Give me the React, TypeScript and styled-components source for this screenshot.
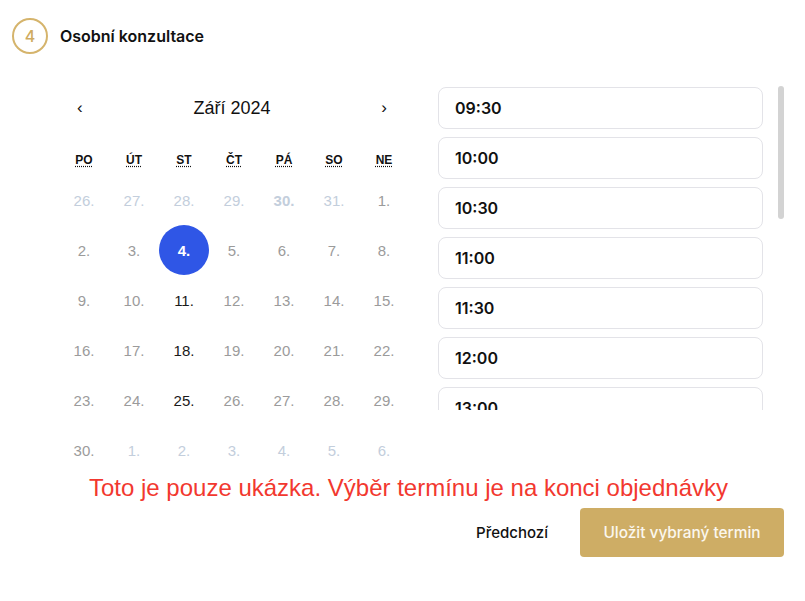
import React from "react";
import styled, { createGlobalStyle } from "styled-components";

const Global = createGlobalStyle`
  html, body { margin: 0; padding: 0; background: #fff; }
  body { font-family: Inter, "Noto Sans", sans-serif; color: #111; }
  * { box-sizing: border-box; }
`;

const Page = styled.div`
  width: 805px;
  display: flex;
  flex-direction: column;
`;

const Header = styled.div`
  display: flex;
  align-items: center;
  gap: 12px;
  padding: 18px 0 0 12px;
`;

const StepBadge = styled.div`
  width: 36px;
  height: 36px;
  border-radius: 50%;
  border: 2px solid #d5b46c;
  color: #cfab5f;
  display: flex;
  align-items: center;
  justify-content: center;
  font-size: 16px;
  font-weight: 500;
`;

const Title = styled.h2`
  margin: 0;
  font-size: 16px;
  font-weight: 600;
  color: #111;
`;

const Main = styled.div`
  display: grid;
  grid-template-columns: 347px 346px;
  column-gap: 32px;
  padding-left: 59px;
  margin-top: 33px;
  align-items: start;
`;

const Calendar = styled.div`
  display: flex;
  flex-direction: column;
  font-family: "Liberation Sans", Arial, sans-serif;
`;

const Nav = styled.div`
  height: 42px;
  display: flex;
  align-items: center;
  justify-content: space-between;
  padding: 0 19px 0 18px;
  margin-bottom: 16px;
`;

const NavArrow = styled.button`
  border: 0;
  background: none;
  padding: 0;
  font-family: "Liberation Sans", Arial, sans-serif;
  font-size: 17px;
  color: #111;
  cursor: pointer;
`;

const MonthLabel = styled.div`
  font-size: 18px;
  color: #111;
`;

const Grid = styled.div`
  display: grid;
  grid-template-columns: repeat(7, 1fr);
`;

const WeekDay = styled.abbr`
  height: 30px;
  display: flex;
  align-items: center;
  justify-content: center;
  font-size: 12px;
  font-weight: 700;
  color: #111;
  text-decoration: underline dotted;
  text-underline-offset: 2px;
  cursor: help;
`;

type Kind = "outside" | "muted" | "available" | "selected";

const DayCell = styled.div`
  height: 50px;
  display: flex;
  align-items: center;
  justify-content: center;
`;

const colors: Record<Kind, string> = {
  outside: "#c3cedc",
  muted: "#9b9b9b",
  available: "#1a1a1a",
  selected: "#ffffff",
};

const Day = styled.div<{ $kind: Kind; $bold?: boolean }>`
  width: 50px;
  height: 50px;
  border-radius: 50%;
  display: flex;
  align-items: center;
  justify-content: center;
  font-size: 15px;
  color: ${(p) => colors[p.$kind]};
  background: ${(p) => (p.$kind === "selected" ? "#2f56e6" : "transparent")};
  font-weight: ${(p) => (p.$bold || p.$kind === "selected" ? 700 : 400)};
`;

const SlotsPane = styled.div`
  position: relative;
  height: 323px;
`;

const Slots = styled.div`
  height: 100%;
  overflow-y: auto;
  padding-right: 21px;
  display: flex;
  flex-direction: column;
  gap: 8px;
  scrollbar-width: none;
  &::-webkit-scrollbar { display: none; }
`;

const ScrollThumb = styled.div`
  position: absolute;
  top: -1px;
  right: 0;
  width: 6px;
  border-radius: 3px;
  background: #d3d3d3;
  pointer-events: none;
`;

const Slot = styled.button`
  flex: 0 0 42px;
  height: 42px;
  width: 100%;
  border: 1px solid #e3e3e8;
  border-radius: 8px;
  background: #fff;
  text-align: left;
  padding: 0 16px;
  font-family: Inter, "Noto Sans", sans-serif;
  font-size: 16px;
  font-weight: 600;
  color: #111;
  cursor: pointer;
`;

const Notice = styled.p`
  margin: 0;
  padding-left: 12px;
  text-align: center;
  font-family: "Liberation Sans", Arial, sans-serif;
  font-size: 24px;
  line-height: 26px;
  color: #f2382f;
`;

const Actions = styled.div`
  display: flex;
  justify-content: flex-end;
  align-items: center;
  gap: 32px;
  padding-right: 21px;
  margin-top: 7px;
`;

const GhostButton = styled.button`
  border: 0;
  background: none;
  padding: 0;
  font-family: Inter, "Noto Sans", sans-serif;
  font-size: 15px;
  font-weight: 500;
  color: #111;
  cursor: pointer;
`;

const PrimaryButton = styled.button`
  width: 204px;
  height: 49px;
  border: 0;
  border-radius: 4px;
  background: #cead65;
  color: #fbf7ee;
  font-family: Inter, "Noto Sans", sans-serif;
  font-size: 15.4px;
  font-weight: 500;
  cursor: pointer;
`;

const weekDays = [
  ["PO", "pondělí"],
  ["ÚT", "úterý"],
  ["ST", "středa"],
  ["ČT", "čtvrtek"],
  ["PÁ", "pátek"],
  ["SO", "sobota"],
  ["NE", "neděle"],
];

type DayData = { n: number; kind: Kind; bold?: boolean };

const days: DayData[] = [
  { n: 26, kind: "outside" },
  { n: 27, kind: "outside" },
  { n: 28, kind: "outside" },
  { n: 29, kind: "outside" },
  { n: 30, kind: "outside", bold: true },
  { n: 31, kind: "outside" },
  ...Array.from({ length: 30 }, (_, i): DayData => {
    const n = i + 1;
    if (n === 4) return { n, kind: "selected" };
    if (n === 11 || n === 18 || n === 25) return { n, kind: "available" };
    return { n, kind: "muted" };
  }),
  ...[1, 2, 3, 4, 5, 6].map((n): DayData => ({ n, kind: "outside" })),
];

const fmt = (mins: number) =>
  `${String(Math.floor(mins / 60)).padStart(2, "0")}:${String(mins % 60).padStart(2, "0")}`;

const times: string[] = [
  ...Array.from({ length: 6 }, (_, i) => fmt(9 * 60 + 30 + i * 30)),
  ...Array.from({ length: 10 }, (_, i) => fmt(13 * 60 + i * 30)),
];

const PANE_H = 323;
const CONTENT_H = times.length * 50 - 8;
const thumbH = Math.round((PANE_H * PANE_H) / CONTENT_H) + 1;

export default function App() {
  return (
    <Page>
      <Global />
      <Header>
        <StepBadge>4</StepBadge>
        <Title>Osobní konzultace</Title>
      </Header>
      <Main>
        <Calendar>
          <Nav>
            <NavArrow aria-label="Předchozí měsíc">‹</NavArrow>
            <MonthLabel>Září 2024</MonthLabel>
            <NavArrow aria-label="Další měsíc">›</NavArrow>
          </Nav>
          <Grid>
            {weekDays.map(([s, t]) => (
              <WeekDay key={s} title={t}>
                {s}
              </WeekDay>
            ))}
            {days.map((d, i) => (
              <DayCell key={i}>
                <Day $kind={d.kind} $bold={d.bold}>
                  {d.n}.
                </Day>
              </DayCell>
            ))}
          </Grid>
        </Calendar>
        <SlotsPane>
          <Slots>
            {times.map((t) => (
              <Slot key={t}>{t}</Slot>
            ))}
          </Slots>
          <ScrollThumb style={{ height: thumbH }} />
        </SlotsPane>
      </Main>
      <Notice>Toto je pouze ukázka. Výběr termínu je na konci objednávky</Notice>
      <Actions>
        <GhostButton>Předchozí</GhostButton>
        <PrimaryButton>Uložit vybraný termin</PrimaryButton>
      </Actions>
    </Page>
  );
}
